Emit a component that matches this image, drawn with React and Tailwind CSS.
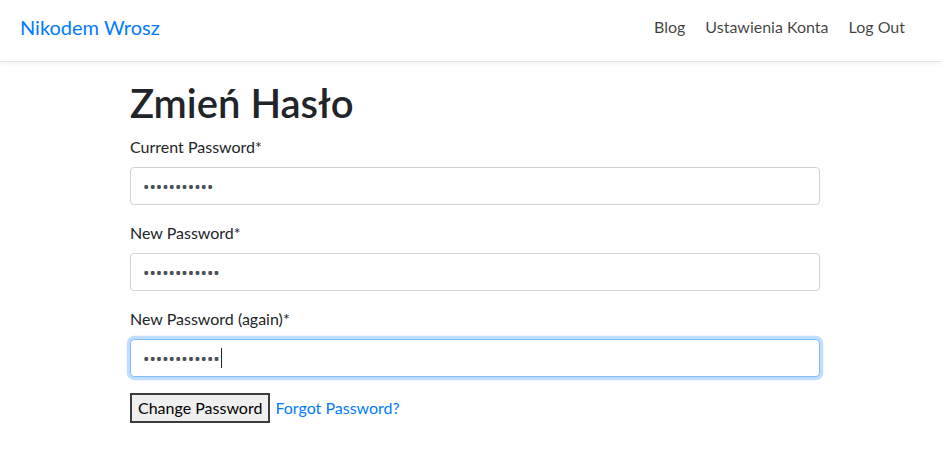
const font = { fontFamily: 'Lato, "Noto Sans", sans-serif' };

const Field = ({ label, value, focused, caretLeft }) => {
  return (
    <div className="mb-4">
      <label className="block mb-2 text-base leading-6 text-[#212529]">{label}</label>
      <div className="relative">
        <input
          type="password"
          readOnly
          defaultValue={value}
          style={{ fontFamily: '"Noto Sans", sans-serif' }}
          className={
            "block w-full h-[38px] px-3 rounded text-[17px] text-[#495057] bg-white outline-none border " +
            (focused
              ? "border-[#80bdff] shadow-[0_0_0_3.2px_rgba(0,123,255,0.25)]"
              : "border-[#ced4da]")
          }
        />
        {focused && (
          <span className="absolute top-[9px] w-px h-[20px] bg-[#212529]" style={{ left: caretLeft }} />
        )}
      </div>
    </div>
  );
};

const App = () => {
  return (
    <div className="min-h-[455px] bg-white" style={font}>
      <nav className="h-[62px] flex items-center justify-between px-4 pb-[8px] border-b border-[#e5e5e5] shadow-[0_2px_4px_rgba(0,0,0,0.05)]">
        <a className="text-xl text-[#007bff] pl-1 leading-[30px]">Nikodem Wrosz</a>
        <ul className="flex items-center text-base text-[rgba(0,0,0,0.75)] pr-[12px]">
          <li className="px-2">Blog</li>
          <li className="px-2 ml-[4px]">Ustawienia Konta</li>
          <li className="px-2 ml-[4px]">Log Out</li>
        </ul>
      </nav>
      <main className="ml-[130px] w-[690px] pt-[17px]">
        <h1 className="text-[40px] leading-[48px] font-semibold text-[#212529] mb-2">Zmień Hasło</h1>
        <Field label="Current Password*" value="12345678901" />
        <Field label="New Password*" value="123456789012" />
        <Field label="New Password (again)*" value="123456789012" focused caretLeft="91px" />
        <div className="flex items-center gap-[5px]">
          <button className="h-[30px] px-[6px] text-base text-black bg-[#efefef] border-2 border-[#3b3b3b] leading-none">
            Change Password
          </button>
          <a className="text-base text-[#007bff]">Forgot Password?</a>
        </div>
      </main>
    </div>
  );
};

export default App;
